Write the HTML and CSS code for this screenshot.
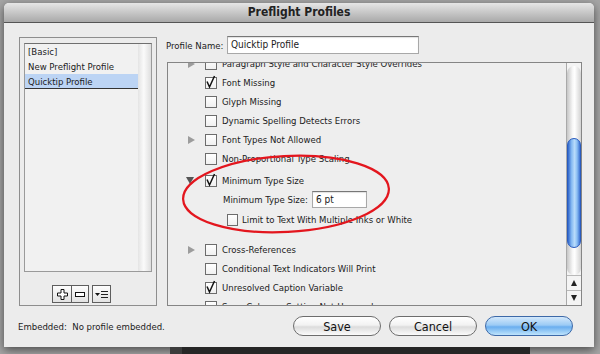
FILE: index.html
```html
<!DOCTYPE html>
<html lang="en">
<head>
    <meta charset="UTF-8">
    <title>Preflight Profiles</title>
    <link rel="stylesheet" href="styles.css">
</head>
<body>
    <div class="screen">
        <div class="dialog">
            <div class="titlebar">Preflight Profiles</div>
            <div class="dialog-body">
                <div class="main">
                    <div class="profiles-box">
                        <div class="profile-list">
                            <ul class="profile-items">
                                <li>[Basic]</li>
                                <li>New Preflight Profile</li>
                                <li class="selected">Quicktip Profile</li>
                            </ul>
                            <div class="list-track"></div>
                        </div>
                        <div class="list-tools">
                            <span class="tool tool-add">
                                <svg width="11" height="11" viewBox="0 0 11 11"><path d="M4 0.5h3v3.5h3.5v3h-3.5v3.5h-3v-3.5h-3.5v-3h3.5z" fill="#fff" stroke="#111"/></svg>
                            </span>
                            <span class="tool tool-remove">
                                <svg width="10" height="5" viewBox="0 0 10 5"><rect x="0.5" y="0.5" width="9" height="4" fill="#fff" stroke="#111"/></svg>
                            </span>
                            <span class="tool tool-menu">
                                <svg width="13" height="9" viewBox="0 0 13 9"><path d="M0 3h5l-2.5 3z" fill="#111"/><path d="M6 1.5h7M6 4.5h7M6 7.5h7" stroke="#222"/></svg>
                            </span>
                        </div>
                    </div>

                    <div class="settings">
                        <div class="name-row">
                            <span class="name-label">Profile Name:</span>
                            <div class="text-field name-field">Quicktip Profile</div>
                        </div>
                        <div class="rules-panel">
                            <div class="rules">
                                <div class="rule">
                                    <span class="twisty closed"></span>
                                    <span class="check"></span>
                                    <span>Paragraph Style and Character Style Overrides</span>
                                </div>
                                <div class="rule">
                                    <span class="twisty"></span>
                                    <span class="check checked"><svg class="tick" width="12" height="14" viewBox="0 -2 12 14"><path d="M2 4.5L4.5 10L9.5 -1" fill="none" stroke="#111" stroke-width="1.5"/></svg></span>
                                    <span>Font Missing</span>
                                </div>
                                <div class="rule">
                                    <span class="twisty"></span>
                                    <span class="check"></span>
                                    <span>Glyph Missing</span>
                                </div>
                                <div class="rule">
                                    <span class="twisty"></span>
                                    <span class="check"></span>
                                    <span>Dynamic Spelling Detects Errors</span>
                                </div>
                                <div class="rule">
                                    <span class="twisty closed"></span>
                                    <span class="check"></span>
                                    <span>Font Types Not Allowed</span>
                                </div>
                                <div class="rule">
                                    <span class="twisty"></span>
                                    <span class="check"></span>
                                    <span>Non-Proportional Type Scaling</span>
                                </div>
                                <div class="rule rule-open">
                                    <span class="twisty open"></span>
                                    <span class="check checked"><svg class="tick" width="12" height="14" viewBox="0 -2 12 14"><path d="M2 4.5L4.5 10L9.5 -1" fill="none" stroke="#111" stroke-width="1.5"/></svg></span>
                                    <span>Minimum Type Size</span>
                                </div>
                                <div class="rule-option">
                                    <span class="option-label">Minimum Type Size:</span>
                                    <div class="text-field size-field">6 pt</div>
                                </div>
                                <div class="rule-option option-check">
                                    <span class="check"></span>
                                    <span>Limit to Text With Multiple Inks or White</span>
                                </div>
                                <div class="rule rule-after">
                                    <span class="twisty closed"></span>
                                    <span class="check"></span>
                                    <span>Cross-References</span>
                                </div>
                                <div class="rule">
                                    <span class="twisty"></span>
                                    <span class="check"></span>
                                    <span>Conditional Text Indicators Will Print</span>
                                </div>
                                <div class="rule">
                                    <span class="twisty"></span>
                                    <span class="check checked"><svg class="tick" width="12" height="14" viewBox="0 -2 12 14"><path d="M2 4.5L4.5 10L9.5 -1" fill="none" stroke="#111" stroke-width="1.5"/></svg></span>
                                    <span>Unresolved Caption Variable</span>
                                </div>
                                <div class="rule">
                                    <span class="twisty"></span>
                                    <span class="check"></span>
                                    <span>Span Columns Setting Not Honored</span>
                                </div>
                            </div>

                            <div class="scrollbar">
                                <div class="scroll-track">
                                    <div class="scroll-thumb"></div>
                                </div>
                                <div class="scroll-arrow arrow-up"></div>
                                <div class="scroll-arrow arrow-down"></div>
                            </div>

                            <svg class="ring" width="220" height="90" viewBox="0 0 220 90">
                                <ellipse cx="108" cy="43" rx="103" ry="38" transform="rotate(-3 108 43)" fill="none" stroke="#e3161e" stroke-width="2.2"/>
                            </svg>
                        </div>
                    </div>
                </div>

                <div class="footer">
                    <span class="embedded">Embedded:&nbsp; No profile embedded.</span>
                    <div class="buttons">
                        <button class="btn">Save</button>
                        <button class="btn">Cancel</button>
                        <button class="btn btn-default">OK</button>
                    </div>
                </div>
            </div>
        </div>
        <div class="photo-strip"></div>
    </div>
</body>
</html>
```

FILE: styles.css
```css
* {
    box-sizing: border-box;
}
body {
    margin: 0;
    height: 354px;
    overflow: hidden;
    background: #a5a5a5;
    font-family: "DejaVu Sans Condensed", "DejaVu Sans", sans-serif;
    font-stretch: semi-condensed;
    font-size: 9.5px;
    color: #1b1b1b;
}
.screen {
    padding-top: 3px;
}
.dialog {
    width: 590px;
    height: 344px;
    margin-left: 4px;
    background: #ececec;
    border-radius: 5px 5px 0 0;
    box-shadow: 0 3px 10px rgba(0, 0, 0, 0.55);
    display: flex;
    flex-direction: column;
}
.titlebar {
    height: 20px;
    border-bottom: 1px solid #555;
    border-radius: 5px 5px 0 0;
    background: linear-gradient(#e6e6e6, #c4c4c4 55%, #a9a9a9);
    text-align: center;
    font-size: 12px;
    font-weight: bold;
    line-height: 19px;
    color: #222;
}
.dialog-body {
    padding: 13px 12px 0 15px;
}
.main {
    display: flex;
    gap: 8px;
    height: 270px;
}

/* profiles */
.profiles-box {
    width: 138px;
    height: 269px;
    margin-top: 1px;
    border: 1px solid #8e8e8e;
    padding: 5px 4px 0 4px;
}
.profile-list {
    height: 229px;
    display: flex;
    border: 1px solid #9a9a9a;
    border-top-color: #6f6f6f;
    background: #f1f1f1;
}
.profile-items {
    flex: 1;
    list-style: none;
    margin: 0;
    padding: 0;
}
.profile-items li {
    height: 15px;
    line-height: 15px;
    padding-left: 3px;
}
.profile-items .selected {
    background: #bcd4f4;
    border-bottom: 1px solid #333;
}
.list-track {
    width: 13px;
    background: linear-gradient(to right, #e4e4e4, #fafafa 45%, #dedede);
}
.list-tools {
    display: flex;
    margin-top: 13px;
    padding-left: 28px;
}
.tool {
    height: 18px;
    display: flex;
    align-items: center;
    justify-content: center;
    border: 1px solid #5e5e5e;
    background: linear-gradient(#fdfdfd, #e2e2e2);
}
.tool-add {
    width: 20px;
}
.tool-remove {
    width: 17px;
    border-left: none;
}
.tool-menu {
    width: 19px;
    margin-left: 3px;
}

/* settings */
.settings {
    width: 417px;
    display: flex;
    flex-direction: column;
}
.name-row {
    display: flex;
    align-items: center;
    height: 18px;
    margin-bottom: 8px;
}
.name-label {
    margin-left: 1px;
    width: 61px;
}
.text-field {
    height: 18px;
    line-height: 16px;
    padding-left: 3px;
    background: #fff;
    border: 1px solid #a8a8a8;
    border-top-color: #777;
    box-shadow: inset 0 1px 1px rgba(0, 0, 0, 0.12);
    font-size: 10px;
}
.name-field {
    width: 192px;
}
.rules-panel {
    position: relative;
    margin-left: 2px;
    height: 244px;
    border: 1px solid #858585;
    background: #eeeeee;
    display: flex;
    overflow: hidden;
}
.rules {
    flex: 1;
    margin-top: -9px;
}
.rule {
    height: 19px;
    display: flex;
    align-items: center;
    padding-left: 20px;
    white-space: nowrap;
}
.rule-open {
    margin-top: 3px;
}
.rule-after {
    margin-top: 11px;
}
.twisty {
    width: 17px;
    height: 8px;
    flex-shrink: 0;
}
.twisty.closed::before {
    content: "";
    display: block;
    width: 0;
    height: 0;
    border-left: 7px solid #9c9c9c;
    border-top: 4px solid transparent;
    border-bottom: 4px solid transparent;
}
.twisty.open::before {
    content: "";
    display: block;
    width: 0;
    height: 0;
    margin-left: -2px;
    border-top: 7px solid #555;
    border-left: 4px solid transparent;
    border-right: 4px solid transparent;
}
.check {
    position: relative;
    width: 12px;
    height: 12px;
    flex-shrink: 0;
    margin-right: 5px;
    border: 1px solid #6c6c6c;
    background: linear-gradient(#ffffff, #f0f0f0);
}
.tick {
    position: absolute;
    left: -1px;
    top: -3px;
}
.rule-option {
    height: 19px;
    display: flex;
    align-items: center;
    padding-left: 55px;
    white-space: nowrap;
}
.option-label {
    width: 89px;
}
.size-field {
    width: 55px;
    height: 17px;
}
.option-check {
    margin-top: 1px;
    padding-left: 59px;
}
.option-check .check {
    width: 11px;
    height: 12px;
    margin-right: 4px;
}

/* scrollbar */
.scrollbar {
    width: 15px;
    border-left: 1px solid #a9a9a9;
    display: flex;
    flex-direction: column;
    background: #f4f4f4;
}
.scroll-track {
    height: 211px;
    padding-top: 72px;
    border-radius: 7px 7px 7px 7px;
    margin-top: 3px;
    background: linear-gradient(to right, #c6c6c6, #f7f7f7 40%, #ffffff 55%, #d2d2d2);
}
.scroll-thumb {
    height: 110px;
    border-radius: 7px;
    border: 1px solid #2a5bbd;
    background: linear-gradient(to right, #2f66cc, #86baf2 30%, #b9dcfb 55%, #8cbff3 75%, #3a70d2);
}
.scroll-arrow {
    height: 15px;
    border-top: 1px solid #b9b9b9;
    display: flex;
    align-items: center;
    justify-content: center;
}
.arrow-up::before {
    content: "";
    border-bottom: 6px solid #222;
    border-left: 3.5px solid transparent;
    border-right: 3.5px solid transparent;
}
.arrow-down::before {
    content: "";
    border-top: 6px solid #222;
    border-left: 3.5px solid transparent;
    border-right: 3.5px solid transparent;
}
.ring {
    position: absolute;
    left: 10px;
    top: 88px;
}

/* footer */
.footer {
    display: flex;
    justify-content: space-between;
    align-items: center;
    margin-top: 10px;
    height: 20px;
}
.embedded {
    margin-left: -1px;
}
.buttons {
    display: flex;
    gap: 8px;
    margin-right: 9px;
}
.btn {
    width: 88px;
    height: 20px;
    padding: 0;
    border: 1px solid #6d6d6d;
    border-radius: 10px;
    background: linear-gradient(#ffffff, #f2f2f2 45%, #dcdcdc 55%, #fbfbfb);
    font-family: inherit;
    font-stretch: semi-condensed;
    font-size: 12.5px;
    color: #111;
}
.btn-default {
    border-color: #3d69a8;
    background: linear-gradient(#d3e8fb, #9ccbf5 45%, #6aaeef 55%, #bfe4fc);
}
.photo-strip {
    width: 360px;
    height: 8px;
    margin-left: 170px;
    background: #262626;
    border-left: 12px solid #3c3c3c;
}
```
